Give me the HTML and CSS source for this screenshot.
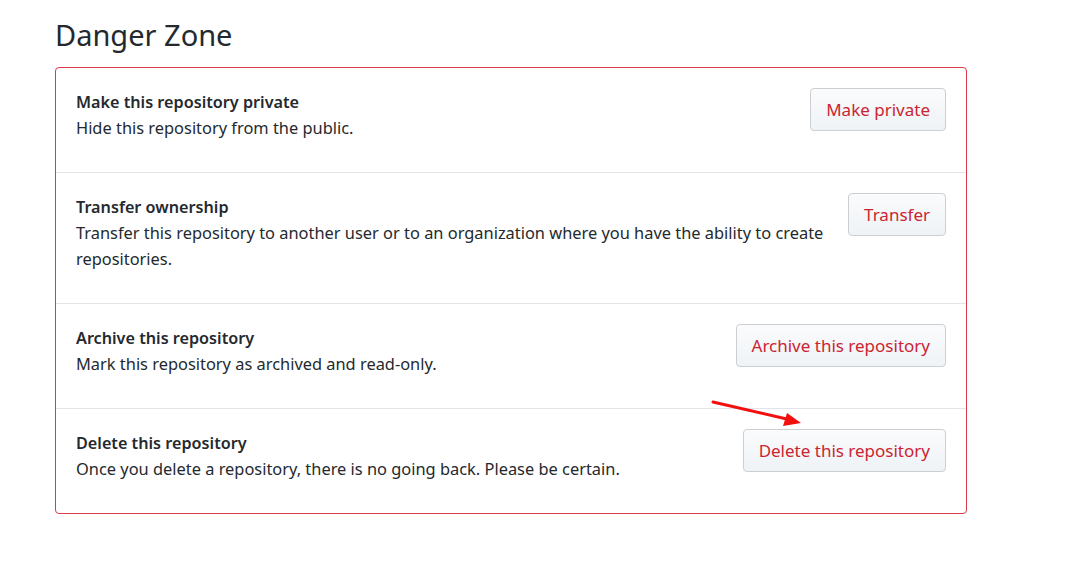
FILE: index.html
```html
<!DOCTYPE html>
<html lang="en">
<head>
  <meta charset="UTF-8" />
  <title>Danger Zone</title>
  <link rel="stylesheet" href="styles.css">
</head>
<body>
  <div class="container">
    <h2 class="subhead">Danger Zone</h2>

    <div class="danger-box">
      <div class="danger-row">
        <div class="danger-text">
          <strong>Make this repository private</strong>
          <p>Hide this repository from the public.</p>
        </div>
        <button type="button" class="btn-danger">Make private</button>
      </div>

      <div class="danger-row">
        <div class="danger-text">
          <strong>Transfer ownership</strong>
          <p>Transfer this repository to another user or to an organization where you have the ability to create repositories.</p>
        </div>
        <button type="button" class="btn-danger">Transfer</button>
      </div>

      <div class="danger-row">
        <div class="danger-text">
          <strong>Archive this repository</strong>
          <p>Mark this repository as archived and read-only.</p>
        </div>
        <button type="button" class="btn-danger">Archive this repository</button>
      </div>

      <div class="danger-row">
        <div class="danger-text">
          <strong>Delete this repository</strong>
          <p>Once you delete a repository, there is no going back. Please be certain.</p>
        </div>
        <button type="button" class="btn-danger">Delete this repository</button>
      </div>

      <!-- annotation arrow pointing at the delete button -->
      <svg class="arrow" width="100" height="40" viewBox="0 0 100 40">
        <line x1="2" y1="3" x2="80" y2="21" stroke="#f40f0f" stroke-width="3" stroke-linecap="round" />
        <polygon points="90,24 72,27 76,14" fill="#f40f0f" />
      </svg>
    </div>
  </div>
</body>
</html>
```

FILE: styles.css
```css
body {
  margin: 0;
  font-family: "Noto Sans", sans-serif;
  color: #24292e;
  background: #fff;
}

.container {
  width: 912px;
  padding: 16px 0 0 55px;
}

.subhead {
  margin: 0 0 13px;
  font-size: 29px;
  font-weight: 400;
  line-height: 38px;
}

.danger-box {
  position: relative;
  border: 1px solid #d73a49;
  border-radius: 4px;
}

.danger-row {
  display: flex;
  justify-content: space-between;
  align-items: flex-start;
  gap: 24px;
  padding: 21px 20px 31px;
  border-top: 1px solid #e1e4e8;
}

.danger-row:first-child {
  border-top: none;
}

.danger-text {
  font-size: 16.4px;
  line-height: 26px;
}

.danger-text strong {
  display: block;
  font-size: 16.2px;
  font-weight: 600;
}

.danger-text p {
  margin: 0;
}

.btn-danger {
  flex-shrink: 0;
  height: 43px;
  margin-top: -1px;
  padding: 0 15px;
  font-family: inherit;
  font-size: 17px;
  color: #cb2431;
  background: linear-gradient(#fafbfc, #eff3f6);
  border: 1px solid #ccced1;
  border-radius: 4px;
  cursor: pointer;
}

.arrow {
  position: absolute;
  left: 655px;
  top: 331px;
}
```
